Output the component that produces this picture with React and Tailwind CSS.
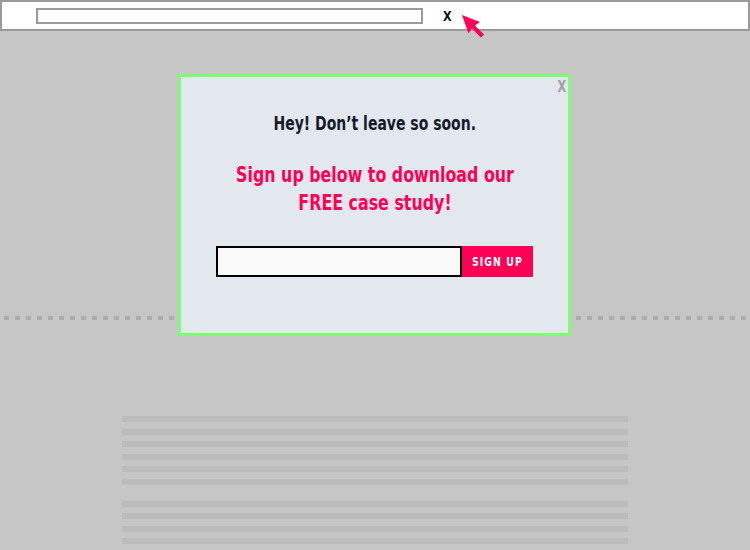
import React from 'react';

const font = { fontFamily: '"DejaVu Sans", sans-serif' };

const lineGroups = [
  [417, 429, 442, 455, 467, 480],
  [502, 514, 527, 540],
];

function Cursor() {
  return (
    <svg width="26" height="26" viewBox="0 0 26 26" className="absolute left-[461px] top-[14px]">
      <path d="M1 1 L19 8 L14 11.5 L23 20.5 L20 23.5 L11 14.5 L7.5 19.5 Z" fill="#ff0055" />
    </svg>
  );
}

export default function App() {
  return (
    <div className="relative w-[750px] h-[550px] overflow-hidden bg-[#c6c6c6]" style={font}>
      {/* Browser bar */}
      <div className="flex items-center h-[31px] bg-white border-2 border-[#9a9a9a]">
        <div className="ml-[34px] w-[387px] h-[16px] border-2 border-[#9a9a9a] bg-white" />
        <span className="ml-[19px] inline-block scale-x-[0.8] text-[14px] font-bold text-[#111] leading-none">X</span>
      </div>
      <Cursor />

      {/* fold line */}
      <div className="mt-[285px] mx-[4px] h-[4px] bg-[repeating-linear-gradient(90deg,#adadad_0_5px,transparent_5px_11px)]" />

      {/* placeholder text */}
      <div className="mt-[96px] ml-[122px] w-[506px] flex flex-col">
        {lineGroups.map((g, gi) => (
          <div key={gi} className={gi ? 'mt-[16px] flex flex-col gap-[6.5px]' : 'flex flex-col gap-[6.5px]'}>
            {g.map((y) => (
              <div key={y} className="h-[6px] bg-[#bbbbbb]" />
            ))}
          </div>
        ))}
      </div>

      {/* Exit popup */}
      <div className="absolute left-[178px] top-[74px] w-[393px] h-[262px] bg-[#e3e8ef] border-[3px] border-[#7dfc74] flex flex-col items-center">
        <span className="absolute right-[0px] top-[-1px] inline-block scale-x-[0.75] text-[15px] font-semibold text-[#a0a0a0]">X</span>
        <h2 className="mt-[32px] whitespace-nowrap scale-x-[0.7] text-[20px] font-bold text-[#151b2b] leading-[28px]">Hey! Don’t leave so soon.</h2>
        <p className="mt-[24px] whitespace-nowrap scale-x-[0.755] text-[21px] font-bold text-[#ff0055] leading-[28px] text-center">
          Sign up below to download our<br />FREE case study!
        </p>
        <div className="mt-[29px] flex h-[31px]">
          <div className="w-[246px] h-full border-2 border-black bg-[#f9f9f9]" />
          <button className="w-[71px] h-full bg-[#ff0055] text-white text-[13px] font-bold">
            <span className="inline-block scale-x-[0.72] tracking-[1.5px]">SIGN UP</span>
          </button>
        </div>
      </div>
    </div>
  );
}
